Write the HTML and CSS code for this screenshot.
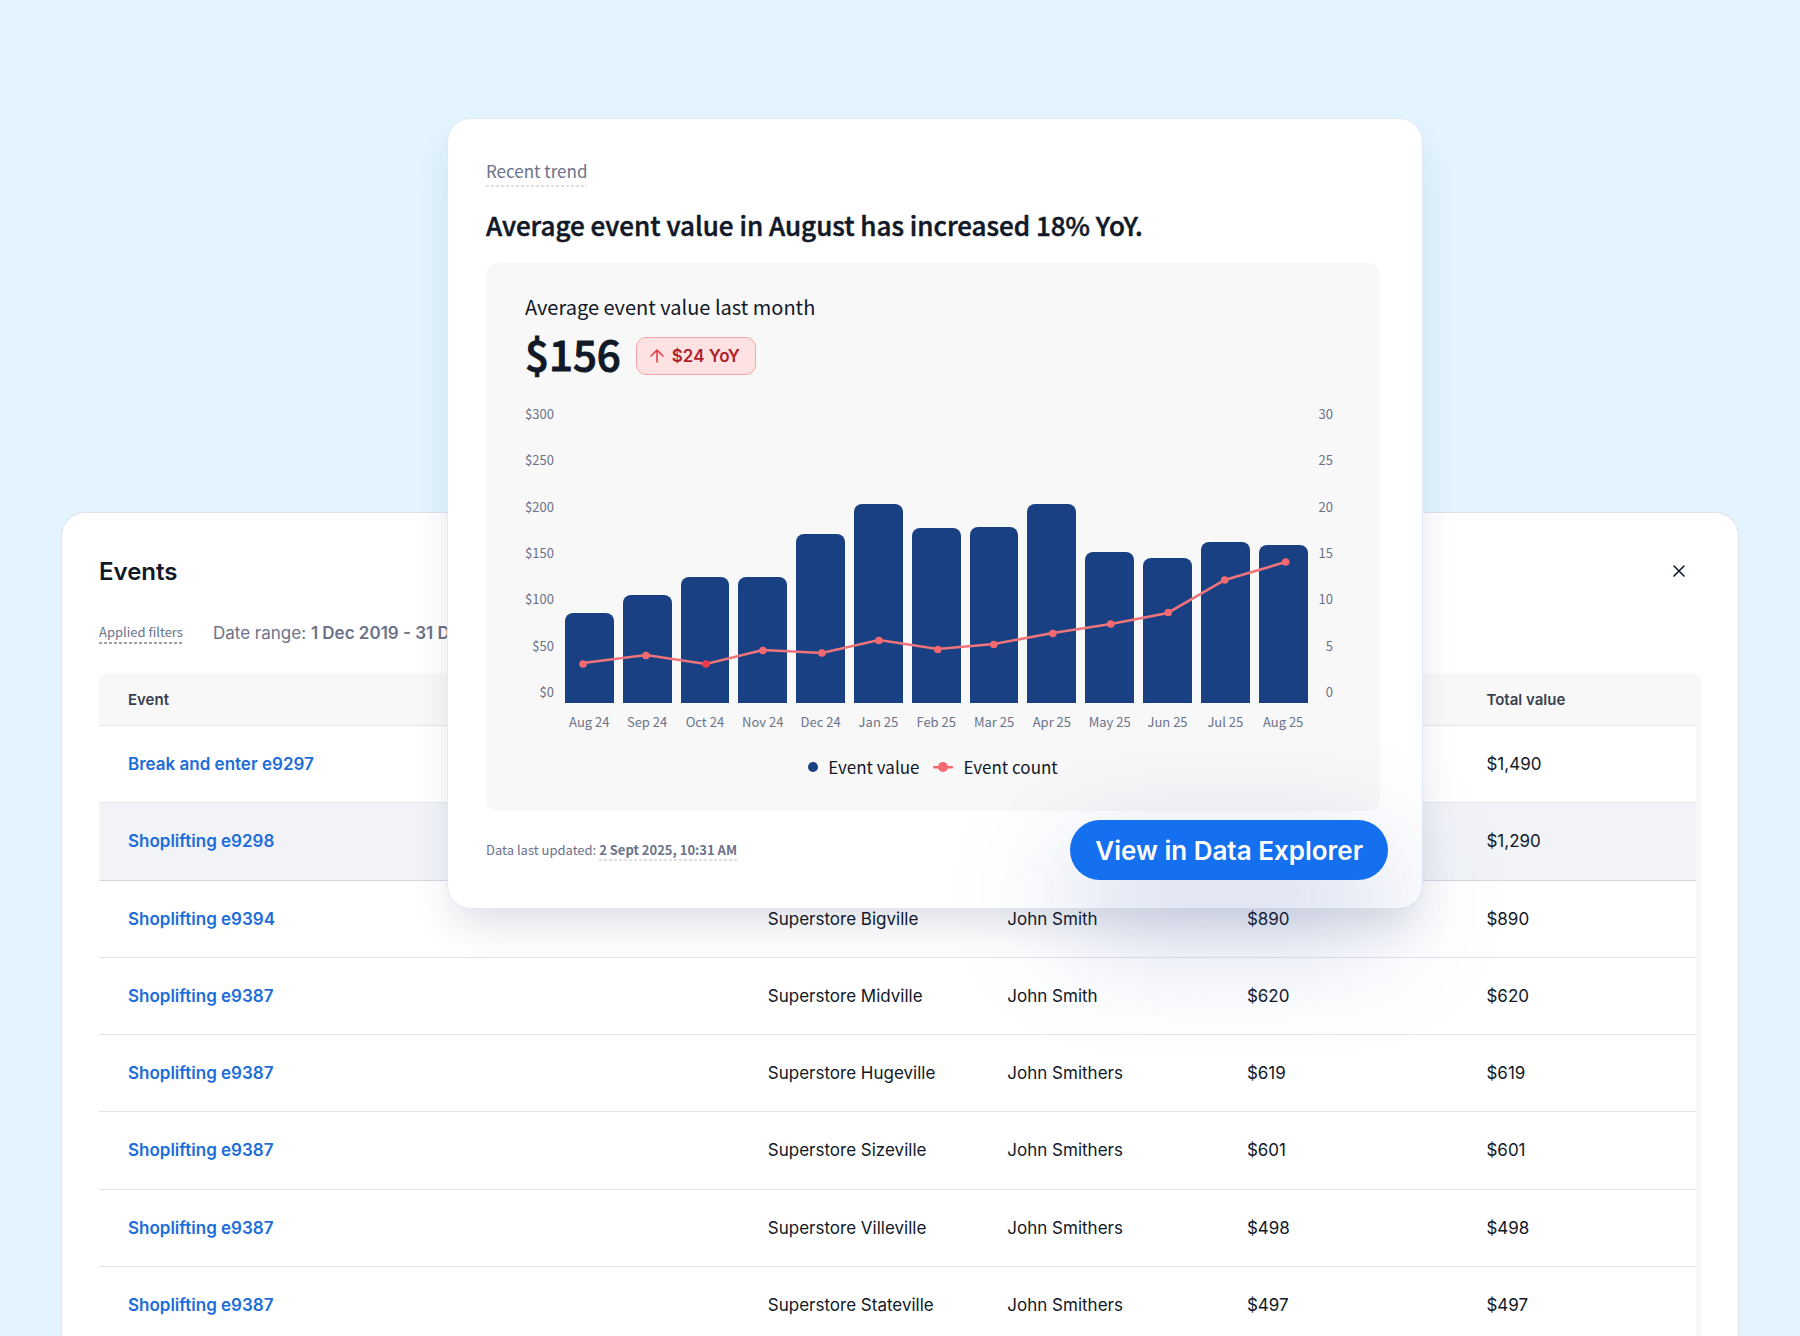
FILE: index.html
```html
<!DOCTYPE html>
<html lang="en">
<head>
    <meta charset="UTF-8">
    <meta name="viewport" content="width=device-width, initial-scale=1.0">
    <title>Events</title>
    <link rel="stylesheet" href="styles.css">
</head>
<body>
    <main class="events">
        <header class="events-header">
            <h1 class="events-title">Events</h1>
            <button type="button" class="close" aria-label="Close">
                <svg width="14" height="14" viewBox="0 0 14 14" fill="none" stroke="currentColor" stroke-width="1.6" stroke-linecap="round">
                    <path d="M2 2l10 10M12 2L2 12"/>
                </svg>
            </button>
        </header>
        <div class="filters">
            <span class="filters-label hint">Applied filters</span>
            <span>Date range: <strong>1 Dec 2019 - 31 Dec 2019</strong></span>
        </div>
        <div class="table-wrap">
            <table class="events-table">
                <thead>
                    <tr>
                        <th scope="col" class="col-event">Event</th>
                        <td></td>
                        <td></td>
                        <td></td>
                        <th scope="col">Total value</th>
                    </tr>
                </thead>
                <tbody>
                    <tr>
                        <td><a href="#">Break and enter e9297</a></td>
                        <td></td>
                        <td></td>
                        <td></td>
                        <td>$1,490</td>
                    </tr>
                    <tr class="selected">
                        <td><a href="#">Shoplifting e9298</a></td>
                        <td></td>
                        <td></td>
                        <td></td>
                        <td>$1,290</td>
                    </tr>
                    <tr>
                        <td><a href="#">Shoplifting e9394</a></td>
                        <td>Superstore Bigville</td>
                        <td>John Smith</td>
                        <td>$890</td>
                        <td>$890</td>
                    </tr>
                    <tr>
                        <td><a href="#">Shoplifting e9387</a></td>
                        <td>Superstore Midville</td>
                        <td>John Smith</td>
                        <td>$620</td>
                        <td>$620</td>
                    </tr>
                    <tr>
                        <td><a href="#">Shoplifting e9387</a></td>
                        <td>Superstore Hugeville</td>
                        <td>John Smithers</td>
                        <td>$619</td>
                        <td>$619</td>
                    </tr>
                    <tr>
                        <td><a href="#">Shoplifting e9387</a></td>
                        <td>Superstore Sizeville</td>
                        <td>John Smithers</td>
                        <td>$601</td>
                        <td>$601</td>
                    </tr>
                    <tr>
                        <td><a href="#">Shoplifting e9387</a></td>
                        <td>Superstore Villeville</td>
                        <td>John Smithers</td>
                        <td>$498</td>
                        <td>$498</td>
                    </tr>
                    <tr>
                        <td><a href="#">Shoplifting e9387</a></td>
                        <td>Superstore Stateville</td>
                        <td>John Smithers</td>
                        <td>$497</td>
                        <td>$497</td>
                    </tr>
                </tbody>
            </table>
        </div>
    </main>

    <section class="trend">
        <div class="trend-label"><span class="hint">Recent trend</span></div>
        <h2 class="trend-title">Average event value in August has increased 18% YoY.</h2>
        <div class="panel">
            <div class="metric-label">Average event value last month</div>
            <div class="metric">
                <span class="metric-value">$156</span>
                <span class="badge">
                    <svg width="16" height="16" viewBox="0 0 16 16" fill="none" stroke="#e5384a" stroke-width="1.5" stroke-linecap="round" stroke-linejoin="round">
                        <path d="M8 14V2M2 8l6-6 6 6"/>
                    </svg>
                    $24 YoY
                </span>
            </div>
            <div class="chart">
                <div class="axis">
                    <span>$300</span><span>$250</span><span>$200</span><span>$150</span><span>$100</span><span>$50</span><span>$0</span>
                </div>
                <div class="plot">
                    <div class="bar" style="height: 30%"></div>
                    <div class="bar" style="height: 36%"></div>
                    <div class="bar" style="height: 42%"></div>
                    <div class="bar" style="height: 42%"></div>
                    <div class="bar" style="height: 56.5%"></div>
                    <div class="bar" style="height: 66.3%"></div>
                    <div class="bar" style="height: 58.2%"></div>
                    <div class="bar" style="height: 58.8%"></div>
                    <div class="bar" style="height: 66.3%"></div>
                    <div class="bar" style="height: 50.5%"></div>
                    <div class="bar" style="height: 48.3%"></div>
                    <div class="bar" style="height: 53.8%"></div>
                    <div class="bar" style="height: 52.8%"></div>
                    <svg class="line" viewBox="0 0 743 300" fill="#f56a70">
                        <polyline fill="none" stroke="#f0757b" stroke-width="2.6" points="18,260 81,252 141,261 198,247 257,250 314,237 373,246 429,241 488,230 546,221 603,210 660,177 721,159"/>
                        <circle cx="18" cy="261" r="3.8"/>
                        <circle cx="81" cy="252.5" r="3.8"/>
                        <circle cx="141" cy="261" r="3.8" fill="#ee3a4b"/>
                        <circle cx="198" cy="247.5" r="3.8"/>
                        <circle cx="257" cy="250" r="3.8"/>
                        <circle cx="314" cy="237.5" r="3.8"/>
                        <circle cx="373" cy="246.5" r="3.8"/>
                        <circle cx="429" cy="241.5" r="3.8"/>
                        <circle cx="488" cy="230.5" r="3.8"/>
                        <circle cx="546" cy="221" r="3.8"/>
                        <circle cx="603.5" cy="209.5" r="3.8"/>
                        <circle cx="660" cy="177" r="3.8"/>
                        <circle cx="721" cy="159" r="3.8"/>
                    </svg>
                </div>
                <div class="axis">
                    <span>30</span><span>25</span><span>20</span><span>15</span><span>10</span><span>5</span><span>0</span>
                </div>
                <div class="months">
                    <span>Aug 24</span><span>Sep 24</span><span>Oct 24</span><span>Nov 24</span><span>Dec 24</span><span>Jan 25</span><span>Feb 25</span><span>Mar 25</span><span>Apr 25</span><span>May 25</span><span>Jun 25</span><span>Jul 25</span><span>Aug 25</span>
                </div>
            </div>
            <div class="legend">
                <span class="legend-item">
                    <svg width="10" height="10" viewBox="0 0 10 10"><circle cx="5" cy="5" r="5" fill="#1a4084"/></svg>
                    Event value
                </span>
                <span class="legend-item">
                    <svg width="20" height="10" viewBox="0 0 20 10" fill="#f56a70"><rect y="4" width="20" height="2.4" rx="1.2"/><circle cx="10" cy="5" r="5"/></svg>
                    Event count
                </span>
            </div>
        </div>
        <footer class="trend-footer">
            <div class="updated">Data last updated: <strong class="hint">2 Sept 2025, 10:31 AM</strong></div>
            <button type="button" class="explore">View in Data Explorer</button>
        </footer>
    </section>
</body>
</html>
```
FILE: styles.css
```css
* {
    box-sizing: border-box;
}

body {
    position: relative;
    height: 100vh;
    margin: 0;
    padding: 512px 61px 0;
    overflow: hidden;
    background: #e3f4ff;
    color: #111827;
    font-family: Inter, sans-serif;
    font-size: 17px;
}

h1,
h2 {
    margin: 0;
}

button {
    border: 0;
    cursor: pointer;
    font-family: inherit;
}

/* dashed underline under explained terms */
.hint {
    padding-bottom: 4px;
    background: repeating-linear-gradient(90deg, #dcdfe5 0 3px, transparent 3px 5px) left bottom / 100% 2px no-repeat;
}

/* events table */
.events {
    padding: 40px 37px 0;
    border: 1px solid #dde3ee;
    border-bottom: 0;
    border-radius: 24px 24px 0 0;
    background: #fff;
}

.events-header {
    display: flex;
    align-items: center;
    justify-content: space-between;
    height: 36px;
}

.events-title {
    font-size: 24px;
    font-weight: 600;
}

.close {
    display: flex;
    margin-right: 7px;
    padding: 8px;
    background: none;
    color: #111827;
}

.filters {
    display: flex;
    align-items: center;
    gap: 30px;
    margin: 32px 0 28px;
    color: #6b7289;
    line-height: 24px;
}

.filters strong {
    font-weight: 600;
}

.filters-label {
    padding-bottom: 2px;
    background-image: repeating-linear-gradient(90deg, #9ba1b2 0 3px, transparent 3px 5px);
    font-family: "Noto Sans CJK SC", sans-serif;
    font-size: 13px;
    line-height: 20px;
}

.table-wrap {
    padding-right: 5px;
    border-radius: 10px 10px 0 0;
    background: #f8f8f8;
}

.events-table {
    width: 100%;
    height: 671px;
    border-collapse: separate;
    border-spacing: 0;
    table-layout: fixed;
}

.events-table th,
.events-table td {
    width: 15%;
    padding: 0 0 0 30px;
    border-bottom: 1px solid #e3e5eb;
    text-align: left;
}

.events-table .col-event {
    width: 40%;
}

.events-table th:first-child,
.events-table td:first-child {
    padding-left: 29px;
}

.events-table th {
    height: 53px;
    color: #374151;
    font-size: 15px;
    font-weight: 600;
}

.events-table tbody {
    background: #fff;
}

.events-table .selected {
    background: #f1f3f7;
}

.events-table .selected td {
    border-color: #d5d8e2;
}

.events-table a {
    color: #1c6dd9;
    font-weight: 600;
    text-decoration: none;
}

/* trend card */
.trend {
    position: absolute;
    top: 118px;
    left: calc(50% - 453px);
    width: 976px;
    padding: 38px 42px 28px 38px;
    border: 1px solid #e3e9f1;
    border-radius: 24px;
    background: #fff;
    box-shadow: 0 22px 40px -8px rgba(30, 40, 80, 0.15);
    font-family: "Noto Sans CJK SC", sans-serif;
}

.trend-label {
    color: #6b7289;
    font-size: 17px;
    line-height: 28px;
}

.trend-title {
    margin: 20px 0 18px;
    font-size: 26px;
    font-weight: 500;
    line-height: 40px;
    -webkit-text-stroke: 0.5px;
}

.panel {
    padding: 30px 47px 30px 39px;
    border-radius: 12px;
    background: #f8f8f8;
}

.metric-label {
    font-size: 20px;
    line-height: 28px;
}

.metric {
    display: flex;
    align-items: center;
    gap: 15px;
    height: 62px;
    margin-top: 4px;
}

.metric-value {
    padding-bottom: 6px;
    font-size: 42px;
    font-weight: 500;
    line-height: 56px;
    -webkit-text-stroke: 1px;
}

.badge {
    display: flex;
    align-items: center;
    gap: 7px;
    height: 38px;
    padding: 0 15px 0 12px;
    border: 1px solid #f5a3a8;
    border-radius: 10px;
    background: #fee2e2;
    color: #b01e2b;
    font-family: Inter, sans-serif;
    font-weight: 600;
}

.chart {
    display: grid;
    grid-template-columns: auto 1fr auto;
    column-gap: 11px;
    row-gap: 10px;
    margin-top: 16px;
    color: #6b7289;
    font-size: 13px;
    line-height: 18px;
}

.axis {
    display: flex;
    flex-direction: column;
    justify-content: space-between;
    padding: 2px 0;
    text-align: right;
}

.plot {
    position: relative;
    display: grid;
    grid-template-columns: repeat(13, 1fr);
    align-items: end;
    gap: 9px;
    height: 300px;
}

.bar {
    border-radius: 8px 8px 0 0;
    background: #1a4084;
}

.line {
    position: absolute;
    top: 0;
    left: 0;
    width: 100%;
    height: 100%;
}

.months {
    display: grid;
    grid-column: 2;
    grid-template-columns: repeat(13, 1fr);
    gap: 9px;
    text-align: center;
    white-space: nowrap;
}

.legend {
    display: flex;
    justify-content: center;
    gap: 14px;
    margin: 22px -8px 0 0;
    font-size: 17px;
    line-height: 28px;
}

.legend-item {
    display: flex;
    align-items: center;
    gap: 10px;
}

.trend-footer {
    display: flex;
    align-items: center;
    justify-content: space-between;
    margin: 9px -8px 0 0;
}

.updated {
    padding-bottom: 2px;
    color: #6b7289;
    font-size: 13px;
}

.updated strong {
    padding-bottom: 2px;
    font-weight: 700;
}

.explore {
    height: 60px;
    padding: 0 25px;
    border-radius: 30px;
    background: #1570ef;
    box-shadow: 0 44px 120px rgba(50, 80, 170, 0.36);
    color: #fff;
    font-family: Inter, sans-serif;
    font-size: 26px;
    font-weight: 600;
}
```
